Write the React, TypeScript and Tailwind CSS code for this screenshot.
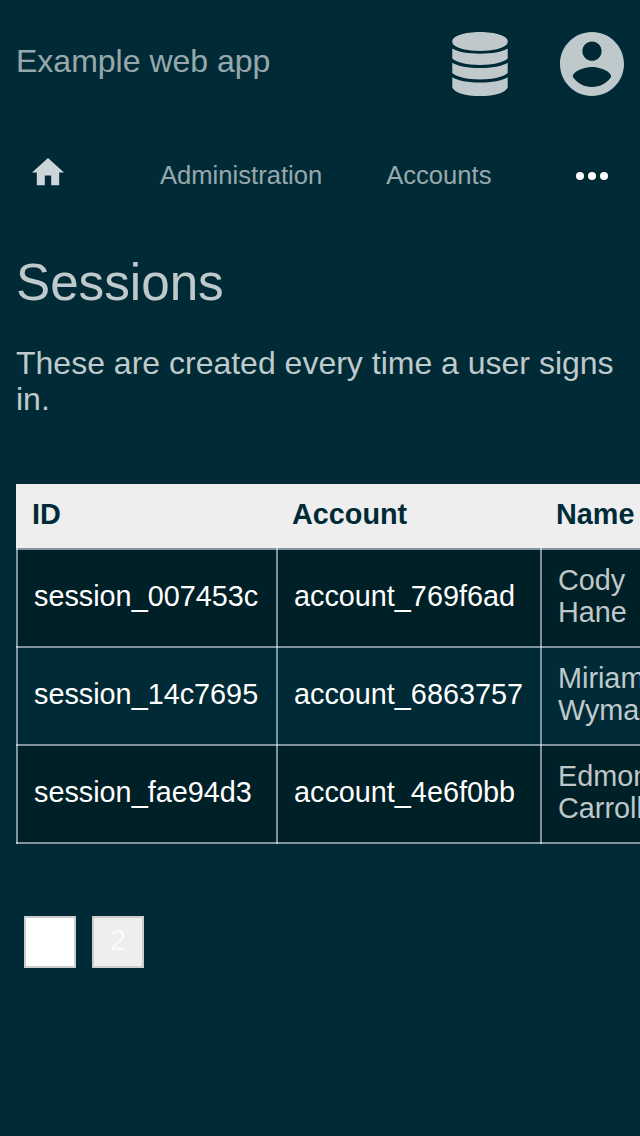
const sessions = [
  { id: "session_007453c", account: "account_769f6ad", name: "Cody Hane" },
  { id: "session_14c7695", account: "account_6863757", name: "Miriam Wyman" },
  { id: "session_fae94d3", account: "account_4e6f0bb", name: "Edmond Carroll" },
];

function DatabaseIcon() {
  return (
    <svg className="h-16 w-14" viewBox="0 0 56 64" fill="currentColor">
      <path d="M28 0C43.3 0 55.7 4 55.7 9v1c0 5-12.4 8.9-27.7 8.9S.3 15 .3 10V9C.3 4 12.7 0 28 0z" />
      <path d="M.3 16.6C6 20 16 21.8 28 21.8S50 20 55.7 16.6V26.6C51 30.8 41 32.9 28 32.9S5 30.8 .3 26.6z" />
      <path d="M.3 30.7C6 34.2 16 36.1 28 36.1S50 34.2 55.7 30.7V41C51 45.2 41 47.4 28 47.4S5 45.2 .3 41z" />
      <path d="M.3 45.2C6 48.7 16 50.6 28 50.6S50 48.7 55.7 45.2V55.4C53.5 60.6 43 64 28 64S2.5 60.6 .3 55.4z" />
    </svg>
  );
}

function AccountIcon() {
  return (
    <svg className="size-16" viewBox="2 2 20 20" fill="currentColor">
      <path d="M12 2C6.48 2 2 6.48 2 12s4.48 10 10 10 10-4.48 10-10S17.52 2 12 2zm0 3c1.66 0 3 1.34 3 3s-1.34 3-3 3-3-1.34-3-3 1.34-3 3-3zm0 14.2c-2.5 0-4.71-1.28-6-3.22.03-1.99 4-3.08 6-3.08 1.99 0 5.97 1.09 6 3.08-1.29 1.94-3.5 3.22-6 3.22z" />
    </svg>
  );
}

function Header() {
  return (
    <header className="flex h-32 items-center px-4">
      <span className="grow pb-1.5 text-[32px] leading-9 text-white/60">Example web app</span>
      <div className="flex items-center gap-[52px] text-white/75">
        <DatabaseIcon />
        <AccountIcon />
      </div>
    </header>
  );
}

function Nav() {
  return (
    <nav className="flex h-24 items-center text-[25.6px] leading-8 text-white/60">
      <a className="w-32 shrink-0 px-8 text-white/80">
        <svg className="mb-2 h-[27.2px] w-8" viewBox="2 3 20 17" fill="currentColor">
          <path d="M10 20v-6h4v6h5v-8h3L12 3 2 12h3v8z" />
        </svg>
      </a>
      <a className="px-8 pb-0.5">Administration</a>
      <a className="px-8 pb-0.5">Accounts</a>
      <a className="ml-auto px-8 text-white">
        <svg className="h-2 w-8" viewBox="0 0 32 8" fill="currentColor">
          <circle cx="4" cy="4" r="4" />
          <circle cx="16" cy="4" r="4" />
          <circle cx="28" cy="4" r="4" />
        </svg>
      </a>
    </nav>
  );
}

function SessionsTable() {
  return (
    <div className="mt-[67px] overflow-hidden pl-4 text-[28.8px] leading-8">
      <div className="grid h-16 w-[688px] grid-cols-[260px_264px_164px] bg-[#eee] pt-3.5 font-bold text-[#002b36]">
        <span className="px-4">ID</span>
        <span className="px-4">Account</span>
        <span className="px-4">Name</span>
      </div>
      <table className="w-[688px] table-fixed border-collapse text-left">
        <colgroup>
          <col className="w-[260px]" />
          <col className="w-[264px]" />
          <col className="w-[164px]" />
        </colgroup>
        <tbody>
          {sessions.map((s) => (
            <tr key={s.id} className="odd:bg-black/25">
              <td className="border-2 border-white/50 px-4 pt-3.5 pb-[18px] text-white">{s.id}</td>
              <td className="border-2 border-white/50 px-4 pt-3.5 pb-[18px] text-white">{s.account}</td>
              <td className="border-2 border-white/50 px-4 pt-3.5 pb-[18px] text-white/75">
                <div className="w-[110px]">{s.name}</div>
              </td>
            </tr>
          ))}
        </tbody>
      </table>
    </div>
  );
}

export default function App() {
  return (
    <div className="h-[1136px] w-[640px] overflow-hidden bg-[#002b36] font-['Liberation_Sans',Arial,sans-serif]">
      <Header />
      <Nav />
      <main>
        <h1 className="px-4 pt-[30px] text-[51.2px] leading-[57px] text-white/75">Sessions</h1>
        <p className="mt-[34px] px-4 text-[32px] leading-9 text-white/75">
          These are created every time a user signs in.
        </p>
        <SessionsTable />
        <div className="mt-[72px] flex gap-4 px-6 text-[28.8px] leading-[44px] text-white/75">
          <button className="size-[52px] border-2 border-[#ccc] bg-white pb-1 text-white">1</button>
          <button className="size-[52px] border-2 border-[#ccc] bg-[#eee] pb-1">2</button>
        </div>
      </main>
    </div>
  );
}
